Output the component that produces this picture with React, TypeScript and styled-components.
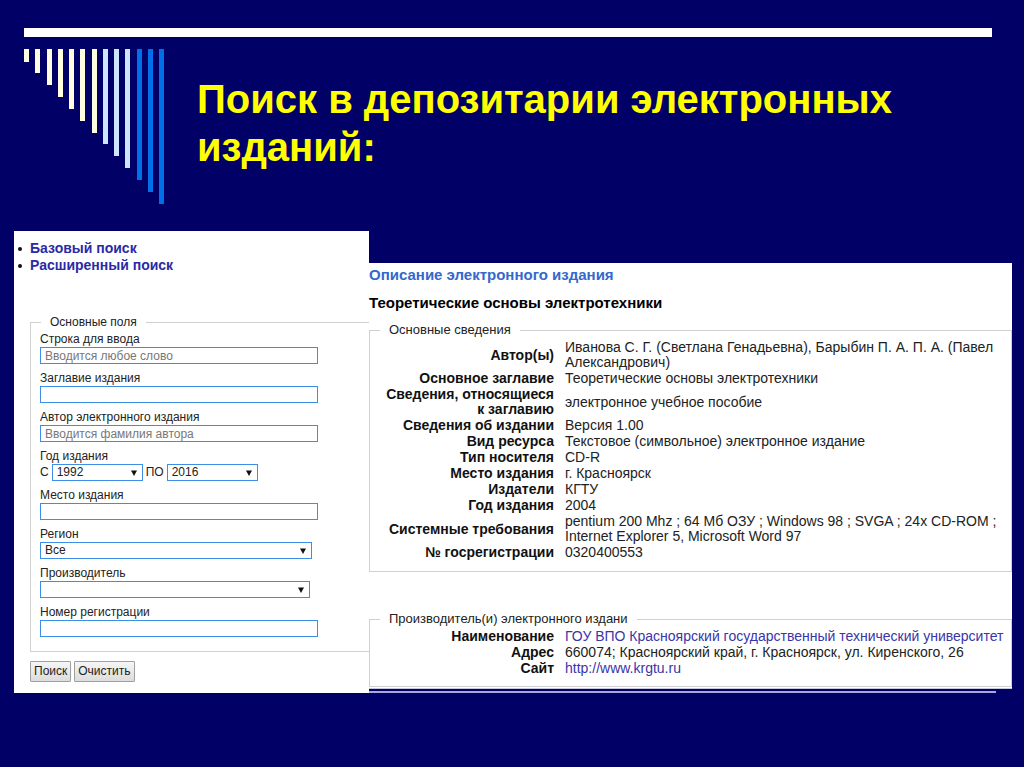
import React from 'react';
import styled, { createGlobalStyle } from 'styled-components';

const GlobalStyle = createGlobalStyle`
  *, *::before, *::after { box-sizing: border-box; }
  body {
    margin: 0;
    background: #000066;
    font-family: "Liberation Sans", Arial, sans-serif;
    color: #222;
  }
`;

const Slide = styled.main`
  min-height: 100vh;
  padding: 28px 12px 0 14px;
  background: #000066;
`;

const TopRule = styled.div`
  height: 9px;
  margin: 0 20px 0 10px;
  background: #fff;
`;

const Header = styled.header`
  display: flex;
  align-items: flex-start;
  gap: 32px;
  margin: 12px 20px 0 10px;
`;

const Stripes = styled.svg`
  flex: none;
  display: block;
`;

const Title = styled.h1`
  margin: 0;
  padding-top: 26px;
  font-size: 40px;
  line-height: 48px;
  font-weight: bold;
  color: #ffff00;
`;

const Columns = styled.div`
  display: grid;
  grid-template-columns: minmax(0, 355fr) minmax(0, 643fr);
  align-items: start;
  margin-top: 27px;
`;

const SearchPanel = styled.section`
  padding: 9px 0 11px 16px;
  background: #fff;
`;

const ModeList = styled.ul`
  margin: 0;
  padding: 0;
  list-style: none;
`;

const ModeItem = styled.li`
  display: flex;
  align-items: center;
  gap: 8px;
  margin-left: -12px;
  font-size: 14px;
  line-height: 17px;
  font-weight: bold;

  &::before {
    content: "";
    width: 4px;
    height: 4px;
    border-radius: 2px;
    background: #111;
  }
`;

const Link = styled.a<{ $strong?: boolean }>`
  color: ${(p) => (p.$strong ? '#2a2aa5' : '#3a35a8')};
  text-decoration: none;
`;

const Group = styled.fieldset<{ $open?: boolean }>`
  min-width: 0;
  margin: 0;
  padding: 0;
  border: 1px solid #d0d0d0;
  ${(p) => p.$open && 'border-right: 0;'}
`;

const GroupTitle = styled.legend<{ $large?: boolean }>`
  margin-left: 10px;
  padding: 0 9px;
  font-size: ${(p) => (p.$large ? 13 : 12)}px;
  line-height: 16px;
`;

const Form = styled.form`
  margin-top: 40px;
`;

const Fields = styled.div`
  display: grid;
  gap: 6px;
  padding: 1px 51px 14px 9px;
`;

const Field = styled.div`
  display: grid;
`;

const Label = styled.label`
  font-size: 12px;
  line-height: 16px;
`;

const TextInput = styled.input`
  width: 100%;
  height: 17px;
  padding: 0 4px;
  border: 1px solid #3c8ee6;
  border-radius: 0;
  background: #fff;
  font: 12px/15px "Liberation Sans", Arial, sans-serif;
  color: #222;

  &::placeholder { color: #777; opacity: 1; }
`;

const SelectBox = styled.span<{ $width: string }>`
  display: grid;
  align-items: center;
  width: ${(p) => p.$width};

  & > * { grid-area: 1 / 1; }
`;

const NativeSelect = styled.select`
  appearance: none;
  width: 100%;
  height: 17px;
  padding: 0 16px 0 4px;
  border: 1px solid #3c8ee6;
  border-radius: 0;
  background: #fff;
  font: 12px/15px "Liberation Sans", Arial, sans-serif;
  color: #222;
`;

const Arrow = styled.svg`
  justify-self: end;
  margin-right: 6px;
  pointer-events: none;
`;

const YearRow = styled.div`
  display: flex;
  align-items: center;
  gap: 3px;
  font-size: 12px;
  line-height: 17px;
`;

const Buttons = styled.div`
  display: flex;
  gap: 3px;
  margin-top: 9px;
`;

const Button = styled.button`
  height: 21px;
  padding: 0 3px;
  border: 1px solid #a0a0a0;
  border-radius: 1px;
  background: linear-gradient(#f6f6f6, #dcdcdc);
  font: 12px/17px "Liberation Sans", Arial, sans-serif;
  color: #222;
`;

const DetailColumn = styled.div`
  margin-top: 32px;
`;

const DetailPanel = styled.section`
  padding: 4px 0 1px;
  background: #fff;
  border-bottom: 1px solid #c8c8dc;
`;

const Heading = styled.h2<{ $accent?: boolean }>`
  margin: 0;
  font-size: 15px;
  line-height: 16px;
  font-weight: bold;
  color: ${(p) => (p.$accent ? '#3468cc' : '#000')};

  & + & { margin-top: 12px; }
`;

const Block = styled.div<{ $gap: number }>`
  margin-top: ${(p) => p.$gap}px;
`;

const Table = styled.table<{ $bottom: number }>`
  width: 100%;
  margin: 1px 0 ${(p) => p.$bottom}px;
  border-collapse: separate;
  border-spacing: 0 1px;
  font-size: 14px;
  line-height: 15px;
`;

const NameCell = styled.th`
  width: 184px;
  padding: 0 0 0 16px;
  text-align: right;
  vertical-align: middle;
  color: #111;
`;

const ValueCell = styled.td`
  padding: 0 0 0 11px;
  vertical-align: middle;
`;

const BottomRule = styled.div`
  height: 2px;
  margin: 2px 16px 0 0;
  background: #a8a8dc;
`;

const bars = [13, 24, 36, 48, 60, 72, 84, 95, 107, 119, 131, 143, 155];

const barColor = (i: number) => (i < 7 ? '#fffde0' : i < 10 ? '#cce6ff' : '#0070e8');

function Select({ id, width, options }: { id: string; width: string; options: string[] }) {
  return (
    <SelectBox $width={width}>
      <NativeSelect id={id}>
        {options.map((o) => (
          <option key={o}>{o}</option>
        ))}
      </NativeSelect>
      <Arrow width="6" height="6" viewBox="0 0 6 6" aria-hidden="true">
        <path d="M0 0.5H6L3 6Z" fill="#111" />
      </Arrow>
    </SelectBox>
  );
}

function TextField({ id, label, placeholder }: { id: string; label: string; placeholder?: string }) {
  return (
    <Field>
      <Label htmlFor={id}>{label}</Label>
      <TextInput id={id} type="text" placeholder={placeholder} />
    </Field>
  );
}

function Details({ rows, bottom }: { rows: [string, React.ReactNode][]; bottom: number }) {
  return (
    <Table $bottom={bottom}>
      <tbody>
        {rows.map(([name, value]) => (
          <tr key={name}>
            <NameCell scope="row">{name}</NameCell>
            <ValueCell>{value}</ValueCell>
          </tr>
        ))}
      </tbody>
    </Table>
  );
}

const mainRows: [string, React.ReactNode][] = [
  ['Автор(ы)', 'Иванова С. Г. (Светлана Генадьевна), Барыбин П. А. П. А. (Павел Александрович)'],
  ['Основное заглавие', 'Теоретические основы электротехники'],
  ['Сведения, относящиеся к\u00a0заглавию', 'электронное учебное пособие'],
  ['Сведения об издании', 'Версия 1.00'],
  ['Вид ресурса', 'Текстовое (символьное) электронное издание'],
  ['Тип носителя', 'CD-R'],
  ['Место издания', 'г. Красноярск'],
  ['Издатели', 'КГТУ'],
  ['Год издания', '2004'],
  ['Системные требования', 'pentium 200 Mhz ; 64 Мб ОЗУ ; Windows 98 ; SVGA ; 24x CD-ROM ; Internet Explorer 5, Microsoft Word 97'],
  ['№ госрегистрации', '0320400553'],
];

const producerRows: [string, React.ReactNode][] = [
  ['Наименование', <Link href="#producer">ГОУ ВПО Красноярский государственный технический университет</Link>],
  ['Адрес', '660074; Красноярский край, г. Красноярск, ул. Киренского, 26'],
  ['Сайт', <Link href="http://www.krgtu.ru">http://www.krgtu.ru</Link>],
];

export default function App() {
  return (
    <>
      <GlobalStyle />
      <Slide>
        <TopRule />
        <Header>
          <Stripes width="141" height="155" viewBox="0 0 141 155" aria-hidden="true">
            {bars.map((h, i) => (
              <rect key={h} x={Math.round(i * 11.27)} y="0" width="5" height={h} fill={barColor(i)} />
            ))}
          </Stripes>
          <Title>Поиск в депозитарии электронных изданий:</Title>
        </Header>
        <Columns>
          <SearchPanel>
            <ModeList>
              <ModeItem><Link $strong href="#basic">Базовый поиск</Link></ModeItem>
              <ModeItem><Link $strong href="#advanced">Расширенный поиск</Link></ModeItem>
            </ModeList>
            <Form onSubmit={(e) => e.preventDefault()}>
              <Group $open>
                <GroupTitle>Основные поля</GroupTitle>
                <Fields>
                  <TextField id="query" label="Строка для ввода" placeholder="Вводится любое слово" />
                  <TextField id="title" label="Заглавие издания" />
                  <TextField id="author" label="Автор электронного издания" placeholder="Вводится фамилия автора" />
                  <Field>
                    <Label as="span">Год издания</Label>
                    <YearRow>
                      <label htmlFor="year-from">С</label>
                      <Select id="year-from" width="91px" options={['1992']} />
                      <label htmlFor="year-to">ПО</label>
                      <Select id="year-to" width="91px" options={['2016']} />
                    </YearRow>
                  </Field>
                  <TextField id="place" label="Место издания" />
                  <Field>
                    <Label htmlFor="region">Регион</Label>
                    <Select id="region" width="98%" options={['Все']} />
                  </Field>
                  <Field>
                    <Label htmlFor="producer">Производитель</Label>
                    <Select id="producer" width="97%" options={['']} />
                  </Field>
                  <TextField id="number" label="Номер регистрации" />
                </Fields>
              </Group>
              <Buttons>
                <Button type="submit">Поиск</Button>
                <Button type="reset">Очистить</Button>
              </Buttons>
            </Form>
          </SearchPanel>
          <DetailColumn>
            <DetailPanel>
              <Heading $accent>Описание электронного издания</Heading>
              <Heading>Теоретические основы электротехники</Heading>
              <Block $gap={11}>
                <Group>
                  <GroupTitle $large>Основные сведения</GroupTitle>
                  <Details rows={mainRows} bottom={10} />
                </Group>
              </Block>
              <Block $gap={39}>
                <Group>
                  <GroupTitle $large>Производитель(и) электронного издани</GroupTitle>
                  <Details rows={producerRows} bottom={9} />
                </Group>
              </Block>
            </DetailPanel>
            <BottomRule />
          </DetailColumn>
        </Columns>
      </Slide>
    </>
  );
}
